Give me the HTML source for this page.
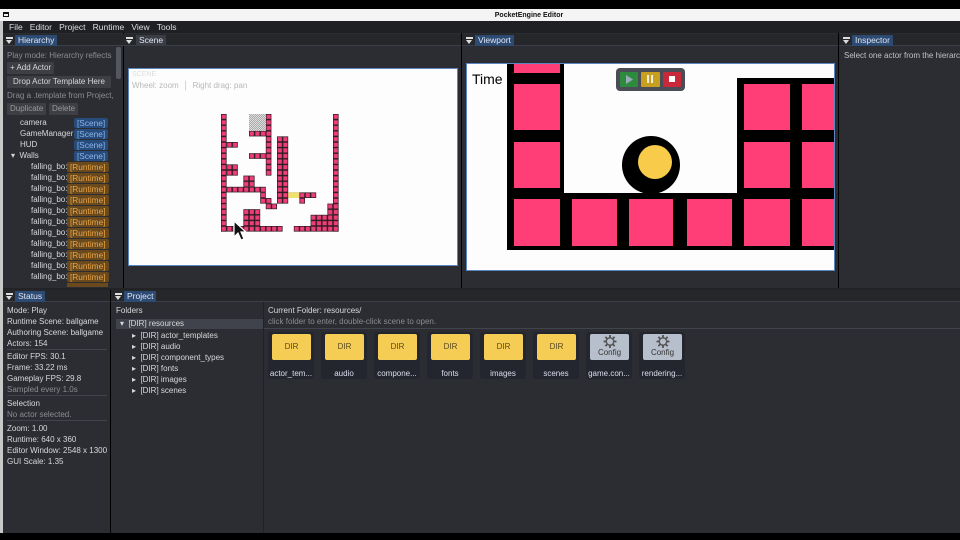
<!DOCTYPE html>
<html><head><meta charset="utf-8"><style>
*{box-sizing:border-box;margin:0;padding:0}
body{width:960px;height:540px;background:#000;font-family:"Liberation Sans",sans-serif;font-size:8px;color:#d8d8dc;position:relative;overflow:hidden}
.a{position:absolute}
.panel{position:absolute;background:#2c2d32}
.hdr{position:absolute;height:12px;background:#26272b;border-bottom:1px solid #3a3f4b}
.tab{position:absolute;top:1px;height:11px;padding:1px 3px;background:#2d4a72;color:#dfe6f0;font-size:8.5px;line-height:9px}
.tri{position:absolute;top:3px;width:7px;height:6px;border-top:2px solid #ddd}
.tri:after{content:"";position:absolute;left:0;top:1px;border-left:3.5px solid transparent;border-right:3.5px solid transparent;border-top:4px solid #ddd}
.t{position:absolute;white-space:nowrap;line-height:11px}
.g{color:#8a8c92}
.btn{position:absolute;background:#3d3f45;color:#d8d8dc;padding:0 3px;line-height:12px;height:12px;border-radius:1px}
.tag{position:absolute;padding:0 3px;border-radius:2px;line-height:10px;height:10px;font-size:8.3px}
.sc{background:#274b7a;color:#8cb6ee;left:74px}
.rt{background:#6a4a1c;color:#e8a54a;left:67px}
.sep{position:absolute;height:1px;background:#42444b}
.card{position:absolute;top:332px;width:46px;height:47px;background:#23262e;border-radius:3px}
.card .b{position:absolute;left:4px;top:2px;width:39px;height:26px;background:#f5cd55;border-radius:2px;color:#5a4a20;text-align:center;line-height:26px;font-size:8px}
.card .b.c{background:#b8bfcc;color:#333;line-height:10px}
.card .l{position:absolute;left:-2px;width:50px;top:37px;text-align:center;font-size:8px;color:#dde}
</style></head><body>
<div class="a" style="left:0;top:9px;width:960px;height:12px;background:#f4f4f4"></div>
<div class="a" style="left:3px;top:12px;width:6px;height:5px;border:1px solid #111;border-top-width:2px"></div>
<div class="t" style="left:0;top:10px;width:1058px;text-align:center;color:#111;font-size:7px;font-weight:bold">PocketEngine Editor</div>
<div class="a" style="left:0;top:21px;width:3px;height:512px;background:#c8c8c8"></div>
<div class="a" style="left:3px;top:21px;width:957px;height:12px;background:#1f2024"></div>
<div class="t" style="left:9px;top:22px;color:#ddd;font-size:8.5px">File&nbsp;&nbsp;&nbsp;Editor&nbsp;&nbsp;&nbsp;Project&nbsp;&nbsp;&nbsp;Runtime&nbsp;&nbsp;&nbsp;View&nbsp;&nbsp;&nbsp;Tools</div>
<div class="panel" style="left:3px;top:33px;width:120px;height:255px"></div>
<div class="panel" style="left:124px;top:33px;width:337px;height:255px"></div>
<div class="panel" style="left:462px;top:33px;width:376px;height:255px"></div>
<div class="panel" style="left:839px;top:33px;width:121px;height:255px"></div>
<div class="a" style="left:3px;top:288px;width:957px;height:2px;background:#222327"></div>
<div class="panel" style="left:3px;top:290px;width:107px;height:243px"></div>
<div class="panel" style="left:111px;top:290px;width:849px;height:243px"></div>
<div class="a" style="left:263px;top:302px;width:1px;height:231px;background:#222"></div>
<div class="hdr" style="left:3px;top:34px;width:120px"></div><div class="tri" style="left:6px;top:37px"></div><div class="tab" style="left:15px;top:35px">Hierarchy</div>
<div class="hdr" style="left:112px;top:34px;width:349px"></div><div class="tri" style="left:126px;top:37px"></div><div class="tab" style="left:136px;top:35px;background:#3a3d44">Scene</div>
<div class="hdr" style="left:462px;top:34px;width:376px"></div><div class="tri" style="left:466px;top:37px"></div><div class="tab" style="left:475px;top:35px">Viewport</div>
<div class="hdr" style="left:839px;top:34px;width:121px"></div><div class="tri" style="left:843px;top:37px"></div><div class="tab" style="left:852px;top:35px">Inspector</div>
<div class="hdr" style="left:3px;top:290px;width:107px"></div><div class="tri" style="left:6px;top:293px"></div><div class="tab" style="left:15px;top:291px">Status</div>
<div class="hdr" style="left:111px;top:290px;width:849px"></div><div class="tri" style="left:115px;top:293px"></div><div class="tab" style="left:124px;top:291px">Project</div>
<div class="a" style="left:116px;top:47px;width:5px;height:32px;background:#55575e;border-radius:2px"></div>
<div class="t g" style="left:7px;top:50px;width:106px;overflow:hidden">Play mode: Hierarchy reflects t</div>
<div class="btn" style="left:7px;top:62px">+ Add Actor</div>
<div class="btn" style="left:7px;top:76px;width:104px;text-align:center">Drop Actor Template Here</div>
<div class="t g" style="left:7px;top:90px;width:106px;overflow:hidden">Drag a .template from Project,</div>
<div class="btn" style="left:7px;top:103px;color:#999">Duplicate</div>
<div class="btn" style="left:49px;top:103px;color:#999">Delete</div>
<div class="t" style="left:20px;top:117px">camera</div><div class="tag sc" style="top:118px">[Scene]</div>
<div class="t" style="left:20px;top:128px">GameManager</div><div class="tag sc" style="top:129px">[Scene]</div>
<div class="t" style="left:20px;top:139px">HUD</div><div class="tag sc" style="top:140px">[Scene]</div>
<div class="t" style="left:11px;top:150px">▾&nbsp; Walls</div><div class="tag sc" style="top:151px">[Scene]</div>
<div class="t" style="left:31px;top:161px">falling_bo:</div><div class="tag rt" style="top:162px">[Runtime]</div>
<div class="t" style="left:31px;top:172px">falling_bo:</div><div class="tag rt" style="top:173px">[Runtime]</div>
<div class="t" style="left:31px;top:183px">falling_bo:</div><div class="tag rt" style="top:184px">[Runtime]</div>
<div class="t" style="left:31px;top:194px">falling_bo:</div><div class="tag rt" style="top:195px">[Runtime]</div>
<div class="t" style="left:31px;top:205px">falling_bo:</div><div class="tag rt" style="top:206px">[Runtime]</div>
<div class="t" style="left:31px;top:216px">falling_bo:</div><div class="tag rt" style="top:217px">[Runtime]</div>
<div class="t" style="left:31px;top:227px">falling_bo:</div><div class="tag rt" style="top:228px">[Runtime]</div>
<div class="t" style="left:31px;top:238px">falling_bo:</div><div class="tag rt" style="top:239px">[Runtime]</div>
<div class="t" style="left:31px;top:249px">falling_bo:</div><div class="tag rt" style="top:250px">[Runtime]</div>
<div class="t" style="left:31px;top:260px">falling_bo:</div><div class="tag rt" style="top:261px">[Runtime]</div>
<div class="t" style="left:31px;top:271px">falling_bo:</div><div class="tag rt" style="top:272px">[Runtime]</div>
<div class="a" style="left:67px;top:283px;width:41px;height:4px;background:#6a4a1c"></div>
<div class="a" style="left:128px;top:68px;width:330px;height:198px;background:#fdfdfe;border:1px solid #5b86c0"></div>
<div class="t" style="left:132px;top:71px;color:#ddd;font-size:7px;line-height:8px">SCENE</div>
<div class="t" style="left:132px;top:80px;color:#b8b8b8">Wheel: zoom &nbsp;│&nbsp; Right drag: pan</div>
<svg class="a" style="left:221px;top:114px" width="120" height="120" viewBox="0 0 120 120">
<defs><pattern id="p" width="5.6" height="5.6" patternUnits="userSpaceOnUse"><rect width="5.6" height="5.6" fill="#2a1a20"/><rect x="0.7" y="0.7" width="4.2" height="4.2" fill="#ef3d77"/></pattern>
<pattern id="k" width="2" height="2" patternUnits="userSpaceOnUse"><rect width="2" height="2" fill="#ddd"/><rect width="1" height="1" fill="#aaa"/><rect x="1" y="1" width="1" height="1" fill="#aaa"/></pattern></defs>
<g fill="url(#p)">
<rect x="0" y="0" width="5.6" height="117.6"/>
<rect x="112" y="0" width="5.6" height="117.6"/>
<rect x="44.8" y="0" width="5.6" height="61.6"/>
<rect x="28" y="16.8" width="16.8" height="5.6"/>
<rect x="28" y="39.2" width="16.8" height="5.6"/>
<rect x="56" y="22.4" width="11.2" height="67.2"/>
<rect x="5.6" y="28" width="11.2" height="5.6"/>
<rect x="5.6" y="50.4" width="11.2" height="11.2"/>
<rect x="22.4" y="61.6" width="11.2" height="11.2"/>
<rect x="5.6" y="72.8" width="39.2" height="5.6"/>
<rect x="39.2" y="78.4" width="5.6" height="5.6"/>
<rect x="67.2" y="78.4" width="28" height="5.6"/>
<rect x="39.2" y="84" width="11.2" height="5.6"/>
<rect x="78.4" y="84" width="5.6" height="5.6"/>
<rect x="44.8" y="89.6" width="11.2" height="5.6"/>
<rect x="22.4" y="95.2" width="16.8" height="16.8"/>
<rect x="106.4" y="89.6" width="5.6" height="11.2"/>
<rect x="89.6" y="100.8" width="22.4" height="11.2"/>
<rect x="0" y="112" width="61.6" height="5.6"/>
<rect x="72.8" y="112" width="44.8" height="5.6"/>
</g>
<rect x="67.2" y="78.4" width="11.2" height="5.6" fill="#f0e070"/>
<rect x="28" y="0" width="16.8" height="16.8" fill="url(#k)"/>
</svg>
<svg class="a" style="left:232px;top:220px" width="16" height="24" viewBox="0 0 16 24"><path d="M2 1 L2 17 L6 13 L9 20 L12 19 L9 12 L14 12 Z" fill="#111" stroke="#fff" stroke-width="1.2"/></svg>
<div class="a" style="left:466px;top:63px;width:369px;height:208px;background:#fdfdfe;border:1px solid #5b86c0"></div>
<svg class="a" style="left:467px;top:64px" width="367" height="206" viewBox="467 64 367 206">
<rect x="507" y="64" width="57" height="186" fill="#000"/>
<rect x="507" y="193" width="327" height="57" fill="#000"/>
<rect x="737" y="78" width="97" height="172" fill="#000"/>
<g fill="#ff3d77">
<rect x="514" y="64" width="46" height="9"/>
<rect x="514" y="84" width="46" height="46"/><rect x="514" y="142" width="46" height="46"/>
<rect x="514" y="199" width="46" height="47"/><rect x="572" y="199" width="45" height="47"/>
<rect x="629" y="199" width="44" height="47"/><rect x="687" y="199" width="45" height="47"/>
<rect x="744" y="199" width="46" height="47"/><rect x="802" y="199" width="32" height="47"/>
<rect x="744" y="84" width="46" height="46"/><rect x="802" y="84" width="32" height="46"/>
<rect x="744" y="142" width="46" height="46"/><rect x="802" y="142" width="32" height="46"/>
</g>
<circle cx="651" cy="165" r="29" fill="#000"/>
<circle cx="655" cy="162" r="17" fill="#f8cc4a"/>
<text x="472" y="84" font-family="Liberation Sans" font-size="14" fill="#000">Time</text>
<rect x="616" y="68" width="69" height="23" rx="4" fill="#4a4d55"/>
<rect x="620" y="72" width="18" height="15" rx="1" fill="#2e8b3e"/><path d="M626 75 L626 84 L633 79.5 Z" fill="#9ab"/>
<rect x="641" y="72" width="19" height="15" rx="1" fill="#c8a020"/><rect x="647" y="75" width="2" height="8" fill="#eed"/><rect x="651" y="75" width="2" height="8" fill="#eed"/>
<rect x="663" y="72" width="18" height="15" rx="1" fill="#c8283a"/><rect x="669" y="76" width="6" height="6" fill="#fff"/>
</svg>
<div class="t g" style="left:844px;top:50px;color:#c0c2c8">Select one actor from the hierarc</div>
<div class="t" style="left:7px;top:305px">Mode: Play</div>
<div class="t" style="left:7px;top:316px">Runtime Scene: ballgame</div>
<div class="t" style="left:7px;top:327px">Authoring Scene: ballgame</div>
<div class="t" style="left:7px;top:338px">Actors: 154</div>
<div class="sep" style="left:7px;top:349px;width:100px"></div>
<div class="t" style="left:7px;top:351px">Editor FPS: 30.1</div>
<div class="t" style="left:7px;top:362px">Frame: 33.22 ms</div>
<div class="t" style="left:7px;top:373px">Gameplay FPS: 29.8</div>
<div class="t g" style="left:7px;top:384px">Sampled every 1.0s</div>
<div class="sep" style="left:7px;top:395px;width:100px"></div>
<div class="t" style="left:7px;top:398px">Selection</div>
<div class="t g" style="left:7px;top:409px">No actor selected.</div>
<div class="sep" style="left:7px;top:420px;width:100px"></div>
<div class="t" style="left:7px;top:423px">Zoom: 1.00</div>
<div class="t" style="left:7px;top:434px">Runtime: 640 x 360</div>
<div class="t" style="left:7px;top:445px">Editor Window: 2548 x 1300</div>
<div class="t" style="left:7px;top:456px">GUI Scale: 1.35</div>
<div class="t" style="left:116px;top:305px">Folders</div>
<div class="a" style="left:116px;top:319px;width:147px;height:10px;background:#40434b"></div>
<div class="t" style="left:120px;top:318px">▾&nbsp; [DIR] resources</div>
<div class="t" style="left:132px;top:330px">▸&nbsp; [DIR] actor_templates</div>
<div class="t" style="left:132px;top:341px">▸&nbsp; [DIR] audio</div>
<div class="t" style="left:132px;top:352px">▸&nbsp; [DIR] component_types</div>
<div class="t" style="left:132px;top:363px">▸&nbsp; [DIR] fonts</div>
<div class="t" style="left:132px;top:374px">▸&nbsp; [DIR] images</div>
<div class="t" style="left:132px;top:385px">▸&nbsp; [DIR] scenes</div>
<div class="t" style="left:268px;top:305px">Current Folder: resources/</div>
<div class="t g" style="left:268px;top:316px">click folder to enter, double-click scene to open.</div>
<div class="sep" style="left:264px;top:328px;width:696px"></div>
<div class="card" style="left:268px"><div class="b">DIR</div><div class="l">actor_tem...</div></div>
<div class="card" style="left:321px"><div class="b">DIR</div><div class="l">audio</div></div>
<div class="card" style="left:374px"><div class="b">DIR</div><div class="l">compone...</div></div>
<div class="card" style="left:427px"><div class="b">DIR</div><div class="l">fonts</div></div>
<div class="card" style="left:480px"><div class="b">DIR</div><div class="l">images</div></div>
<div class="card" style="left:533px"><div class="b">DIR</div><div class="l">scenes</div></div>
<div class="card" style="left:586px"><div class="b c"><svg width="14" height="13" viewBox="0 0 14 14" style="display:block;margin:1px auto 0"><g stroke="#555" stroke-width="2"><line x1="7" y1="0" x2="7" y2="14"/><line x1="0" y1="7" x2="14" y2="7"/><line x1="2" y1="2" x2="12" y2="12"/><line x1="12" y1="2" x2="2" y2="12"/></g><circle cx="7" cy="7" r="4" fill="#b8bfcc" stroke="#555" stroke-width="1.5"/></svg>Config</div><div class="l">game.con...</div></div>
<div class="card" style="left:639px"><div class="b c"><svg width="14" height="13" viewBox="0 0 14 14" style="display:block;margin:1px auto 0"><g stroke="#555" stroke-width="2"><line x1="7" y1="0" x2="7" y2="14"/><line x1="0" y1="7" x2="14" y2="7"/><line x1="2" y1="2" x2="12" y2="12"/><line x1="12" y1="2" x2="2" y2="12"/></g><circle cx="7" cy="7" r="4" fill="#b8bfcc" stroke="#555" stroke-width="1.5"/></svg>Config</div><div class="l">rendering...</div></div>
</body></html>
